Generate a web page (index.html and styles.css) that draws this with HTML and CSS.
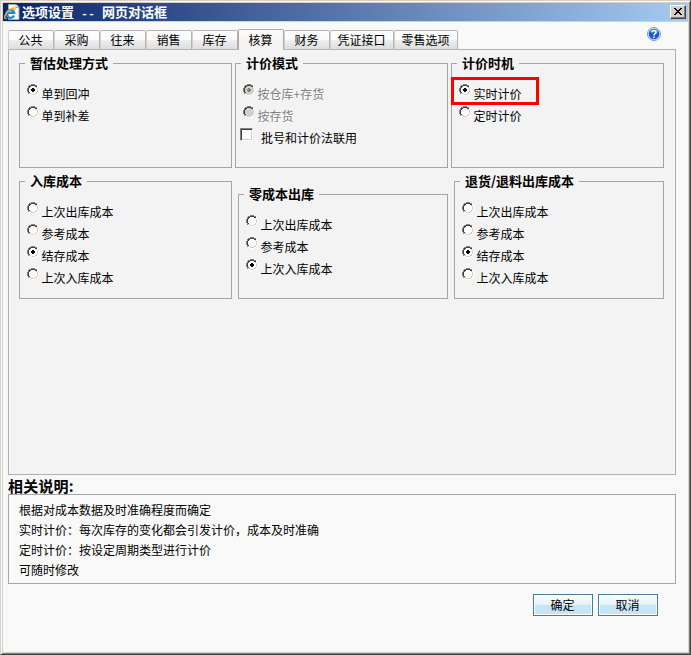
FILE: index.html
```html
<!DOCTYPE html>
<html lang="zh-CN">
<head>
<meta charset="utf-8">
<title>选项设置 -- 网页对话框</title>
<link rel="stylesheet" href="styles.css">
</head>
<body>
<svg class="defs" aria-hidden="true">
  <symbol id="radio-frame" viewBox="0 0 12 12">
    <path fill="#808080" d="M4 0h4v1H4zM2 1h2v1H2zM8 1h2v1H8zM1 2h1v2H1zM0 4h1v4H0zM1 8h1v2H1z"/>
    <path fill="#404040" d="M4 1h4v1H4zM2 2h2v1H2zM8 2h2v1H8zM2 3h1v1H2zM1 4h1v4H1zM2 8h1v1H2z"/>
    <path fill="#d4d0c8" d="M9 3h1v1H9zM10 4h1v4h-1zM9 8h1v1H9zM2 9h2v1H2zM8 9h2v1H8zM4 10h4v1H4z"/>
    <path fill="#fff" d="M10 2h1v2h-1zM11 4h1v4h-1zM10 8h1v2h-1zM8 10h2v1H8zM2 10h2v1H2zM4 11h4v1H4z"/>
    <path fill="currentColor" d="M4 2h4v1h1v1h1v4H9v1H8v1H4V9H3V8H2V4h1V3h1z"/>
  </symbol>
  <symbol id="radio-dot" viewBox="0 0 12 12"><path fill="currentColor" d="M5 4h2v1h1v2H7v1H5V7H4V5h1z"/></symbol>
</svg>
<div class="dialog">
  <header class="titlebar">
    <svg class="ie" viewBox="0 0 16 16">
      <path d="M4.500.5h7.500l3 3v12H4.500z" fill="#f5f6f2" stroke="#aaa99b"/>
      <path d="M12 .5v3h3" fill="#fff" stroke="#aaa99b"/>
      <path d="M10 11.500A4 4 0 1 1 10.200 8.800H3.500" fill="none" stroke="#2089d4" stroke-width="2.200"/>
      <path d="M2.500 14.500C-1 15 1 9.500 5 6.500S12 3 10.500 6" fill="none" stroke="#efb22c" stroke-width="1.300"/>
    </svg>
    <h1>选项设置<span class="dash"> -- </span>网页对话框</h1>
    <button class="close" aria-label="关闭"><svg viewBox="0 0 8 7"><path d="M0 0h2v1h1v1h2V1h1V0h2v1H7v1H6v1H5v1h1v1h1v1h1v1H6V6H5V5H3v1H2v1H0V6h1V5h1V4h1V3H2V2H1V1H0z"/></svg></button>
  </header>
  <main>
    <div class="top">
      <nav class="tabs">
        <a>公共</a><a>采购</a><a>往来</a><a>销售</a><a>库存</a><a class="active">核算</a><a>财务</a><a class="wide">凭证接口</a><a class="wide">零售选项</a>
      </nav>
      <svg class="help" viewBox="0 0 14 14">
        <circle cx="7" cy="7" r="6.500" fill="#e4efff" stroke="#699bdd"/>
        <circle cx="7" cy="7" r="5.300" fill="#1c58d2"/>
        <path d="M3 5.500a4.200 4.200 0 0 1 8 0z" fill="#4f86e6"/>
        <path d="M4.900 5.300C5 2.900 9.100 2.900 9.100 5.200 9.100 6.600 7 6.700 7 8.400M7 9.500v1.500" fill="none" stroke="#fff" stroke-width="1.600"/>
      </svg>
    </div>
    <section class="panel">
      <div class="row first">
        <fieldset>
          <legend>暂估处理方式</legend>
          <label><svg class="radio"><use href="#radio-frame"/><use class="dot" href="#radio-dot"/></svg>单到回冲</label>
          <label><svg class="radio"><use href="#radio-frame"/></svg>单到补差</label>
        </fieldset>
        <fieldset>
          <legend>计价模式</legend>
          <label class="disabled"><svg class="radio"><use href="#radio-frame"/><use class="dot" href="#radio-dot"/></svg>按仓库+存货</label>
          <label class="disabled"><svg class="radio"><use href="#radio-frame"/></svg>按存货</label>
          <label class="check"><span class="box"></span>批号和计价法联用</label>
        </fieldset>
        <fieldset>
          <legend>计价时机</legend>
          <label><svg class="radio"><use href="#radio-frame"/><use class="dot" href="#radio-dot"/></svg>实时计价</label>
          <label><svg class="radio"><use href="#radio-frame"/></svg>定时计价</label>
          <span class="highlight"></span>
        </fieldset>
      </div>
      <div class="row second">
        <fieldset>
          <legend>入库成本</legend>
          <label><svg class="radio"><use href="#radio-frame"/></svg>上次出库成本</label>
          <label><svg class="radio"><use href="#radio-frame"/></svg>参考成本</label>
          <label><svg class="radio"><use href="#radio-frame"/><use class="dot" href="#radio-dot"/></svg>结存成本</label>
          <label><svg class="radio"><use href="#radio-frame"/></svg>上次入库成本</label>
        </fieldset>
        <fieldset class="short">
          <legend>零成本出库</legend>
          <label><svg class="radio"><use href="#radio-frame"/></svg>上次出库成本</label>
          <label><svg class="radio"><use href="#radio-frame"/></svg>参考成本</label>
          <label><svg class="radio"><use href="#radio-frame"/><use class="dot" href="#radio-dot"/></svg>上次入库成本</label>
        </fieldset>
        <fieldset>
          <legend>退货/退料出库成本</legend>
          <label><svg class="radio"><use href="#radio-frame"/></svg>上次出库成本</label>
          <label><svg class="radio"><use href="#radio-frame"/></svg>参考成本</label>
          <label><svg class="radio"><use href="#radio-frame"/><use class="dot" href="#radio-dot"/></svg>结存成本</label>
          <label><svg class="radio"><use href="#radio-frame"/></svg>上次入库成本</label>
        </fieldset>
      </div>
    </section>
    <h2>相关说明:</h2>
    <section class="notes">
      <p>根据对成本数据及时准确程度而确定</p>
      <p>实时计价：每次库存的变化都会引发计价，成本及时准确</p>
      <p>定时计价：按设定周期类型进行计价</p>
      <p>可随时修改</p>
    </section>
    <footer><button class="action">确定</button><button class="action">取消</button></footer>
  </main>
</div>
</body>
</html>
```
FILE: styles.css
```css
* { box-sizing: border-box; }
body {
  margin: 0;
  overflow: hidden;
  font: 12px/20px "Noto Sans CJK SC", sans-serif;
  color: #000;
}
.defs { display: none; }
h1, h2, p { margin: 0; }
button { font: inherit; padding: 0; }

.dialog {
  width: 691px;
  height: 655px;
  padding: 2px 1px 1px 2px;
  border: 1px solid;
  border-color: #d4d0c8 #404040 #404040 #d4d0c8;
  box-shadow: inset 1px 1px #fff, inset -1px -1px #808080, inset 2px 2px #d4d0c8, inset -2px -2px #d4d0c8;
  background: #f9f9f9;
}
.titlebar {
  display: flex;
  align-items: center;
  width: 685px;
  height: 18px;
  padding: 0 2px 0 1px;
  background: linear-gradient(90deg, #0a246a, #a6caf0);
}
.ie { width: 16px; height: 16px; }
h1 {
  flex: 1;
  margin-left: 2px;
  font-size: 13px;
  line-height: 18px;
  color: #fff;
  white-space: pre;
}
.dash { font: bold 11.700px/16px "Liberation Mono", monospace; }
.close {
  display: flex;
  align-items: center;
  justify-content: center;
  width: 16px;
  height: 14px;
  border: 1px solid;
  border-color: #fff #404040 #404040 #fff;
  box-shadow: inset -1px -1px #808080;
  background: #d4d0c8;
}
.close svg { width: 8px; height: 7px; margin: -1px 0 0 -1px; shape-rendering: crispEdges; }

main {
  width: 685px;
  height: 631px;
  padding: 0 12px 0 5px;
  border-top: 1px solid #d4d0c8;
}
.top {
  display: flex;
  justify-content: space-between;
  height: 27px;
  padding-right: 15px;
}
.help { width: 14px; height: 14px; margin-top: 5px; }
.tabs {
  display: flex;
  align-items: flex-end;
  height: 28px;
  position: relative;
}
.tabs a {
  width: 46px;
  height: 20px;
  padding-right: 1px;
  border: 1px solid #b4b4b4;
  border-left-color: #d0d0d0;
  border-radius: 2px 2px 0 0;
  background: linear-gradient(#fcfcfc 45%, #ececec 55%, #dedede);
  line-height: 17px;
  text-align: center;
}
.tabs .wide { width: 64px; }
.tabs .active {
  height: 21px;
  border-color: #aaa;
  border-bottom: 0;
  background: linear-gradient(#fcfcfc, #f3f3f3 60%);
  line-height: 19px;
}
.panel {
  height: 426px;
  padding: 5px 11px 0 10px;
  border: 1px solid #b0b0b0;
  background: #f3f3f3;
}
.row { display: grid; justify-content: space-between; align-items: end; width: 645px; }
.first { grid-template-columns: 213px 213px 213px; height: 113px; }
.second { grid-template-columns: 213px 210px 210px; height: 126px; margin-top: 5px; }
fieldset {
  position: relative;
  min-width: 0;
  height: 113px;
  margin: 0;
  padding: 11px 5px 0;
  border: 1px solid #a5a5a5;
}
.second fieldset { height: 126px; }
.second .short { height: 113px; }
legend {
  height: 17px;
  padding: 0 5px;
  font-size: 13px;
  font-weight: 700;
  line-height: 16px;
}
label {
  display: flex;
  align-items: flex-start;
  gap: 2.5px;
  height: 22px;
  padding-left: 2px;
  line-height: 22px;
  white-space: nowrap;
}
.radio {
  flex: none;
  width: 12px;
  height: 12px;
  margin-top: 1px;
  color: #fff;
  shape-rendering: crispEdges;
}
.dot { color: #000; }
.disabled { color: #808080; text-shadow: 1px 1px #fff; }
.disabled .radio { color: #d4d0c8; }
.disabled .dot { color: #808080; }
.check { gap: 8px; padding-left: 0; margin-left: -1px; }
.box {
  width: 13px;
  height: 13px;
  margin-top: 1px;
  border: 1px solid;
  border-color: #808080 #fff #fff #808080;
  box-shadow: inset 1px 1px #404040, inset -1px -1px #d4d0c8;
  background: #fff;
}
.highlight {
  position: absolute;
  top: 5px;
  left: -1px;
  width: 88px;
  height: 28px;
  border: 3px solid #f00;
}
h2 { height: 19px; font-size: 15px; line-height: 22px; letter-spacing: .2px; }
.notes {
  height: 90px;
  padding: 5px 10px;
  border: 1px solid #a5a5a5;
}
footer {
  display: flex;
  justify-content: flex-end;
  gap: 5px;
  padding: 10px 18px 0 0;
}
.action {
  width: 60px;
  height: 22px;
  padding: 0 1px 1px 0;
  border: 1px solid #447e9f;
  box-shadow: inset 0 0 0 1px #fff;
  background: linear-gradient(#fbfdff 0%, #e5f4fc 47%, #c5e5f8 50%, #c5e5f8 100%);
  line-height: 18px;
  color: #000;
}
```
